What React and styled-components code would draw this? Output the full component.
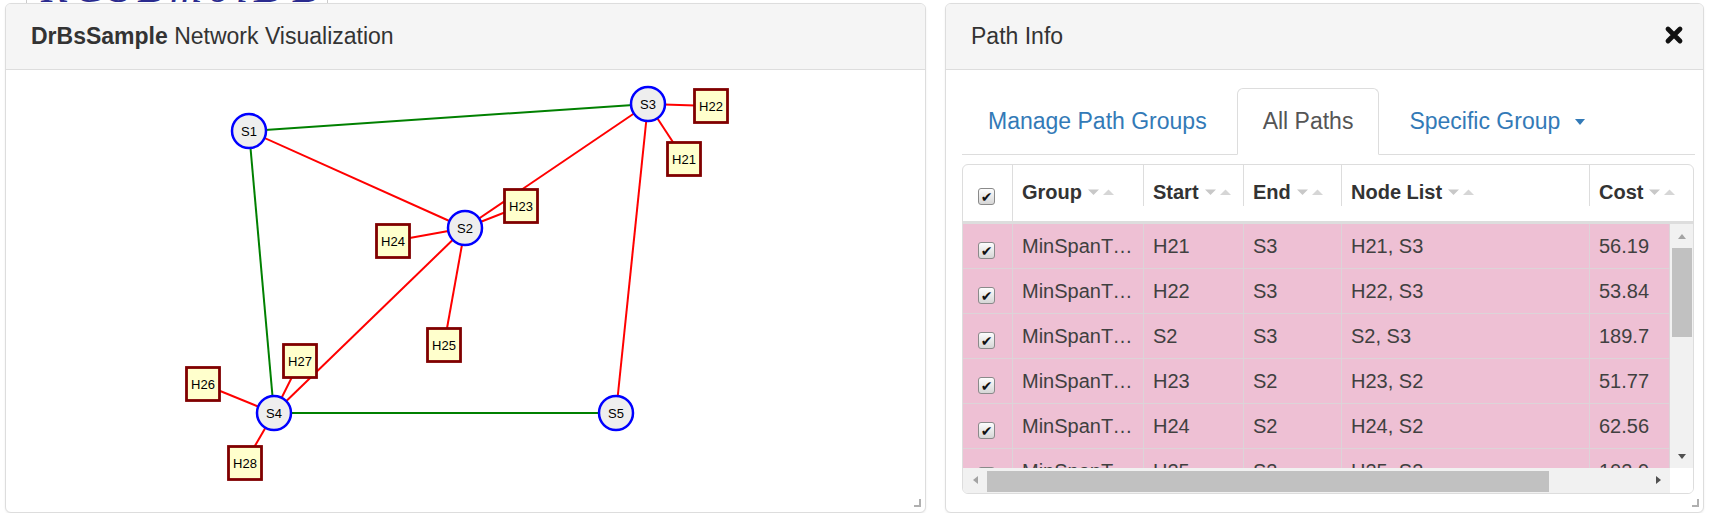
import styled, { createGlobalStyle } from "styled-components";

const GlobalStyle = createGlobalStyle`
  body {
    margin: 0;
    background: #ffffff;
    font-family: "Liberation Sans", Arial, sans-serif;
    color: #333333;
  }
`;

// node centres, in the coordinates of the graph body
const nodes = {
    S1: { x: 243, y: 61, kind: "switch" },
    S2: { x: 459, y: 158, kind: "switch" },
    S3: { x: 642, y: 34, kind: "switch" },
    S4: { x: 268, y: 343, kind: "switch" },
    S5: { x: 610, y: 343, kind: "switch" },
    H21: { x: 678, y: 89, kind: "host" },
    H22: { x: 705, y: 36, kind: "host" },
    H23: { x: 515, y: 136, kind: "host" },
    H24: { x: 387, y: 171, kind: "host" },
    H25: { x: 438, y: 275, kind: "host" },
    H26: { x: 197, y: 314, kind: "host" },
    H27: { x: 294, y: 291, kind: "host" },
    H28: { x: 239, y: 393, kind: "host" },
};

const links = [
    ["S1", "S3", "#008000"],
    ["S1", "S4", "#008000"],
    ["S4", "S5", "#008000"],
    ["S1", "S2", "#ff0000"],
    ["S2", "S3", "#ff0000"],
    ["S2", "H23", "#ff0000"],
    ["S2", "H24", "#ff0000"],
    ["S2", "H25", "#ff0000"],
    ["S2", "S4", "#ff0000"],
    ["S3", "H21", "#ff0000"],
    ["S3", "H22", "#ff0000"],
    ["S3", "S5", "#ff0000"],
    ["S4", "H26", "#ff0000"],
    ["S4", "H27", "#ff0000"],
    ["S4", "H28", "#ff0000"],
];

const columns = ["Group", "Start", "End", "Node List", "Cost"];

const paths = [
    { group: "MinSpanTree", start: "H21", end: "S3", nodes: "H21, S3", cost: "56.19" },
    { group: "MinSpanTree", start: "H22", end: "S3", nodes: "H22, S3", cost: "53.84" },
    { group: "MinSpanTree", start: "S2", end: "S3", nodes: "S2, S3", cost: "189.7" },
    { group: "MinSpanTree", start: "H23", end: "S2", nodes: "H23, S2", cost: "51.77" },
    { group: "MinSpanTree", start: "H24", end: "S2", nodes: "H24, S2", cost: "62.56" },
    { group: "MinSpanTree", start: "H25", end: "S2", nodes: "H25, S2", cost: "102.9" },
];

function NetworkGraph() {
    return (
        <svg width="919" height="442">
            {links.map(([a, b, color]) => (
                <line
                    key={a + b}
                    x1={nodes[a].x}
                    y1={nodes[a].y}
                    x2={nodes[b].x}
                    y2={nodes[b].y}
                    stroke={color}
                    strokeWidth="2"
                />
            ))}
            {Object.entries(nodes).map(([name, n]) => (
                <g key={name}>
                    {n.kind === "switch" ? (
                        <circle cx={n.x} cy={n.y} r="17" fill="#eeeeee" stroke="#0000ff" strokeWidth="2.5" />
                    ) : (
                        <rect x={n.x - 16.5} y={n.y - 16.5} width="33" height="33" fill="#ffffcc" stroke="#800000" strokeWidth="2.8" />
                    )}
                    <NodeLabel x={n.x} y={n.y + 0.5}>{name}</NodeLabel>
                </g>
            ))}
        </svg>
    );
}

function SortIcon() {
    return (
        <SortMark width="27" height="8" viewBox="0 0 27 8">
            <polygon points="0,1.5 11,1.5 5.5,7" fill="#c8c8c8" />
            <polygon points="15,7 26,7 20.5,1.5" fill="#d6d6d6" />
        </SortMark>
    );
}

export default function App() {
    return (
        <>
            <GlobalStyle />
            <Backdrop>
                <BackdropLogo>RCSBmolDB</BackdropLogo>
            </Backdrop>
            <Page>
                <Panel $width={921}>
                    <PanelHeading>
                        <Title><b>DrBsSample</b> Network Visualization</Title>
                    </PanelHeading>
                    <GraphBody>
                        <NetworkGraph />
                    </GraphBody>
                    <ResizeHandle />
                </Panel>

                <Panel $width={759}>
                    <PanelHeading>
                        <Title>Path Info</Title>
                        <CloseButton>
                            <svg width="20" height="20" viewBox="0 0 20 20">
                                <path d="M4 4 L16 16 M16 4 L4 16" stroke="#111" strokeWidth="4.8" strokeLinecap="round" />
                            </svg>
                        </CloseButton>
                    </PanelHeading>
                    <PathBody>
                        <Tabs>
                            <Tab>Manage Path Groups</Tab>
                            <Tab $active>All Paths</Tab>
                            <Tab>Specific Group<Caret /></Tab>
                        </Tabs>
                        <DataTable>
                            <HeaderRow>
                                <CheckCell $head><CheckBox>✔</CheckBox></CheckCell>
                                {columns.map(c => (
                                    <HeadCell key={c}>{c}<SortIcon /></HeadCell>
                                ))}
                            </HeaderRow>
                            <RowsViewport>
                                {paths.map((p, i) => (
                                    <Row key={i}>
                                        <CheckCell><CheckBox>✔</CheckBox></CheckCell>
                                        <Cell>{p.group}</Cell>
                                        <Cell>{p.start}</Cell>
                                        <Cell>{p.end}</Cell>
                                        <Cell>{p.nodes}</Cell>
                                        <Cell>{p.cost}</Cell>
                                    </Row>
                                ))}
                            </RowsViewport>
                            <VScroll>
                                <ArrowBox $size={24}><Arrow $dir="up" /></ArrowBox>
                                <VThumb />
                                <Spacer />
                                <ArrowBox $size={24}><Arrow $dir="down" $dark /></ArrowBox>
                            </VScroll>
                            <HScroll>
                                <ArrowBox $size={24}><Arrow $dir="left" /></ArrowBox>
                                <HThumb />
                                <Spacer />
                                <ArrowBox $size={24}><Arrow $dir="right" $dark /></ArrowBox>
                            </HScroll>
                            <Corner />
                        </DataTable>
                    </PathBody>
                    <ResizeHandle />
                </Panel>
            </Page>
        </>
    );
}

const Backdrop = styled.div`
    height: 3px;
    overflow: hidden;
    display: flex;
    padding-left: 26px;
`;

const BackdropLogo = styled.div`
    width: 286px;
    border-left: 1px solid #cccccc;
    border-right: 1px solid #cccccc;
    font-family: "Liberation Serif", serif;
    font-style: italic;
    font-size: 44px;
    letter-spacing: 6px;
    line-height: 44px;
    margin-top: -34px;
    padding-left: 14px;
    color: #2b2b8f;
    white-space: nowrap;
    overflow: hidden;
`;

const Page = styled.div`
    display: flex;
    gap: 19px;
    padding-left: 5px;
`;

const Panel = styled.div`
    position: relative;
    box-sizing: border-box;
    width: ${props => props.$width}px;
    height: 510px;
    display: flex;
    flex-direction: column;
    background: #ffffff;
    border: 1px solid #dddddd;
    border-radius: 6px;
    box-shadow: 0 1px 2px rgba(0, 0, 0, 0.08);
`;

const PanelHeading = styled.div`
    height: 65px;
    flex-shrink: 0;
    display: flex;
    align-items: center;
    justify-content: space-between;
    padding: 0 19px 0 25px;
    background: #f5f5f5;
    border-bottom: 1px solid #dddddd;
    border-radius: 5px 5px 0 0;
`;

const Title = styled.div`
    font-size: 23px;
    color: #333333;
    b {
        font-weight: 700;
    }
`;

const CloseButton = styled.div`
    display: flex;
    width: 20px;
    height: 20px;
    margin-top: -4px;
    cursor: pointer;
`;

const GraphBody = styled.div`
    flex: 1;
    overflow: hidden;
`;

const NodeLabel = styled.text`
    font-family: "Liberation Sans", Arial, sans-serif;
    font-size: 13px;
    fill: #000000;
    text-anchor: middle;
    dominant-baseline: central;
`;

const ResizeHandle = styled.div`
    position: absolute;
    right: 4px;
    bottom: 5px;
    width: 5px;
    height: 6px;
    border-right: 2px solid #b0b0b0;
    border-bottom: 2px solid #b0b0b0;
`;

const PathBody = styled.div`
    flex: 1;
    display: flex;
    flex-direction: column;
    padding: 18px 8px 0 16px;
`;

const Tabs = styled.div`
    display: flex;
    border-bottom: 1px solid #dddddd;
    margin-bottom: 9px;
`;

const Tab = styled.div`
    display: flex;
    align-items: center;
    padding: 16px 25px;
    margin: 0 4px -1px 0;
    font-size: 23px;
    line-height: 33px;
    color: ${props => props.$active ? "#555555" : "#337ab7"};
    background: ${props => props.$active ? "#ffffff" : "transparent"};
    border: 1px solid ${props => props.$active ? "#dddddd" : "transparent"};
    border-bottom-color: ${props => props.$active ? "#ffffff" : "transparent"};
    border-radius: 6px 6px 0 0;
    cursor: pointer;
`;

const Caret = styled.span`
    display: inline-block;
    margin-left: 15px;
    border-top: 6px solid #337ab7;
    border-left: 5px solid transparent;
    border-right: 5px solid transparent;
`;

const DataTable = styled.div`
    box-sizing: border-box;
    width: 732px;
    height: 330px;
    display: grid;
    grid-template-columns: 707px 23px;
    grid-template-rows: 59px 244px 25px;
    border: 1px solid #dddddd;
    border-radius: 6px;
    overflow: hidden;
    background: #ffffff;
`;

const colTemplate = "50px 131px 100px 98px 248px 1fr";

const HeaderRow = styled.div`
    grid-column: 1 / -1;
    display: grid;
    grid-template-columns: ${colTemplate};
    border-bottom: 3px solid #dddddd;
`;

const HeadCell = styled.div`
    display: flex;
    align-items: center;
    height: 28px;
    padding: 13px 9px 0;
    font-size: 20px;
    font-weight: 700;
    color: #333333;
    border-right: 1px solid #dddddd;
    white-space: nowrap;
    &:last-child {
        border-right: none;
    }
`;

const SortMark = styled.svg`
    margin-left: 6px;
    flex-shrink: 0;
`;

const RowsViewport = styled.div`
    overflow: hidden;
    background: #ffffff;
`;

const Row = styled.div`
    display: grid;
    grid-template-columns: ${colTemplate};
    height: 45px;
    box-sizing: border-box;
    background: #eec0d4;
    border-bottom: 1px solid #dcd4d8;
`;

const Cell = styled.div`
    padding: 8px 9px 0;
    font-size: 20px;
    line-height: 28px;
    color: #404040;
    white-space: nowrap;
    overflow: hidden;
    text-overflow: ellipsis;
    border-right: 1px solid #dcd4d8;
`;

const CheckCell = styled.div`
    display: flex;
    align-items: flex-start;
    padding: ${props => props.$head ? "23px" : "18px"} 0 0 15px;
    border-right: 1px solid ${props => props.$head ? "#dddddd" : "#dcd4d8"};
`;

const CheckBox = styled.span`
    box-sizing: border-box;
    display: flex;
    align-items: center;
    justify-content: center;
    width: 17px;
    height: 17px;
    border: 1px solid #8a8a8a;
    border-radius: 3px;
    background: linear-gradient(#fdfdfd, #d6d6d6);
    font-family: "DejaVu Sans", sans-serif;
    font-size: 14px;
    font-weight: 700;
    line-height: 1;
    color: #111111;
`;

const VScroll = styled.div`
    display: flex;
    flex-direction: column;
    background: #f1f1f1;
`;

const HScroll = styled.div`
    display: flex;
    background: #f1f1f1;
`;

const Corner = styled.div`
    background: #ffffff;
`;

const Spacer = styled.div`
    flex: 1;
`;

const ArrowBox = styled.div`
    flex-shrink: 0;
    width: ${props => props.$size}px;
    height: ${props => props.$size}px;
    display: flex;
    align-items: center;
    justify-content: center;
`;

const arrowBorders = {
    up: "border-bottom: 5px solid COLOR; border-left: 4px solid transparent; border-right: 4px solid transparent;",
    down: "border-top: 5px solid COLOR; border-left: 4px solid transparent; border-right: 4px solid transparent;",
    left: "border-right: 5px solid COLOR; border-top: 4px solid transparent; border-bottom: 4px solid transparent;",
    right: "border-left: 5px solid COLOR; border-top: 4px solid transparent; border-bottom: 4px solid transparent;",
};

const Arrow = styled.span`
    width: 0;
    height: 0;
    ${props => arrowBorders[props.$dir].replace("COLOR", props.$dark ? "#505050" : "#a3a3a3")}
`;

const VThumb = styled.div`
    height: 89px;
    margin: 0 1px 0 2px;
    background: #c1c1c1;
`;

const HThumb = styled.div`
    width: 562px;
    margin: 3px 0 1px;
    background: #c1c1c1;
`;
